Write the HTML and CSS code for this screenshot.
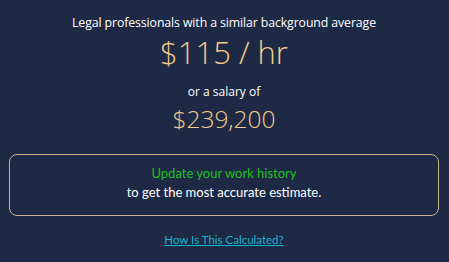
FILE: index.html
```html
<!DOCTYPE html>
<html>
<head>
<meta charset="utf-8">
<link rel="stylesheet" href="styles.css">
</head>
<body>
<main class="card">
  <p class="intro">Legal professionals with a similar background average</p>
  <p class="rate">$115 / hr</p>
  <p class="or">or a salary of</p>
  <p class="salary">$239,200</p>
  <div class="notice">
    <a class="update" href="#">Update your work history</a>
    <span class="note">to get the most accurate estimate.</span>
  </div>
  <a class="how" href="#">How Is This Calculated?</a>
</main>
</body>
</html>
```
FILE: styles.css
```css
html, body {
  margin: 0;
  padding: 0;
  background: #1e2a45;
}
.card {
  width: 449px;
  height: 262px;
  box-sizing: border-box;
  padding: 14px 10px 0 9px;
  display: flex;
  flex-direction: column;
  align-items: center;
  color: #ffffff;
  font-family: "Open Sans", "Liberation Sans", sans-serif;
}
.card p { margin: 0; }
.intro {
  font-size: 12.3px;
  line-height: 18px;
  letter-spacing: -0.1px;
}
.rate {
  margin-top: 2px !important;
  font-size: 31px;
  line-height: 36px;
  font-weight: 300;
  color: #f3ca8c;
}
.or {
  margin-top: 14px !important;
  font-size: 12px;
  line-height: 16px;
}
.salary {
  margin-top: 3.5px !important;
  font-size: 24.5px;
  line-height: 30px;
  font-weight: 300;
  color: #f3ca8c;
}
.notice {
  align-self: stretch;
  margin-top: 20.5px;
  height: 62px;
  box-sizing: border-box;
  padding-bottom: 4px;
  border: 1px solid #c9b48c;
  border-radius: 8px;
  display: flex;
  flex-direction: column;
  align-items: center;
  justify-content: center;
  font-family: Lato, "Liberation Sans", sans-serif;
  font-size: 13px;
  line-height: 19px;
}
.update {
  color: #1fc01f;
  text-decoration: none;
}
.note { color: #ffffff; }
.how {
  margin-top: 15.5px;
  font-family: Lato, "Liberation Sans", sans-serif;
  font-size: 11.5px;
  line-height: 16px;
  color: #1ab3cf;
}
```
